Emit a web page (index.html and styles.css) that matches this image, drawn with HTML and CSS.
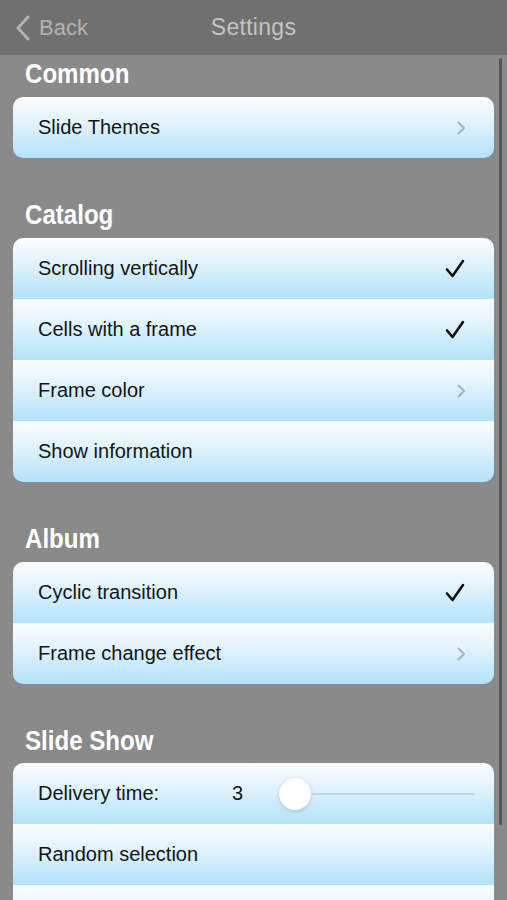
FILE: index.html
```html
<!DOCTYPE html>
<html>
<head>
<meta charset="utf-8">
<link rel="stylesheet" href="styles.css">
</head>
<body>
<div class="nav">
  <div class="back">
    <svg class="back-chev" width="14" height="26" viewBox="0 0 14 26"><path d="M12 2 L2 13 L12 24" fill="none" stroke="#b3b3b3" stroke-width="3" stroke-linecap="round" stroke-linejoin="round"/></svg>
    <span>Back</span>
  </div>
  <div class="title">Settings</div>
</div>
<div class="content">
  <h2 class="section"><span>Common</span></h2>
  <div class="card">
    <div class="row"><span class="label">Slide Themes</span><svg class="chev" width="9" height="14" viewBox="0 0 9 14"><path d="M1.5 1.5 L7 7 L1.5 12.5" fill="none" stroke="#a3b5c0" stroke-width="2" stroke-linecap="round" stroke-linejoin="round"/></svg></div>
  </div>

  <h2 class="section"><span>Catalog</span></h2>
  <div class="card">
    <div class="row"><span class="label">Scrolling vertically</span><svg class="check" width="20" height="20" viewBox="0 0 20 20"><path d="M2 10.5 L7.5 17 L18 2" fill="none" stroke="#111" stroke-width="2.6" stroke-linecap="round" stroke-linejoin="round"/></svg></div>
    <div class="row"><span class="label">Cells with a frame</span><svg class="check" width="20" height="20" viewBox="0 0 20 20"><path d="M2 10.5 L7.5 17 L18 2" fill="none" stroke="#111" stroke-width="2.6" stroke-linecap="round" stroke-linejoin="round"/></svg></div>
    <div class="row"><span class="label">Frame color</span><svg class="chev" width="9" height="14" viewBox="0 0 9 14"><path d="M1.5 1.5 L7 7 L1.5 12.5" fill="none" stroke="#a3b5c0" stroke-width="2" stroke-linecap="round" stroke-linejoin="round"/></svg></div>
    <div class="row"><span class="label">Show information</span></div>
  </div>

  <h2 class="section"><span>Album</span></h2>
  <div class="card">
    <div class="row"><span class="label">Cyclic transition</span><svg class="check" width="20" height="20" viewBox="0 0 20 20"><path d="M2 10.5 L7.5 17 L18 2" fill="none" stroke="#111" stroke-width="2.6" stroke-linecap="round" stroke-linejoin="round"/></svg></div>
    <div class="row"><span class="label">Frame change effect</span><svg class="chev" width="9" height="14" viewBox="0 0 9 14"><path d="M1.5 1.5 L7 7 L1.5 12.5" fill="none" stroke="#a3b5c0" stroke-width="2" stroke-linecap="round" stroke-linejoin="round"/></svg></div>
  </div>

  <h2 class="section"><span>Slide Show</span></h2>
  <div class="card last">
    <div class="row slider-row">
      <span class="label fixed">Delivery time:</span>
      <span class="value">3</span>
      <div class="slider"><div class="thumb"></div><div class="track"></div></div>
    </div>
    <div class="row"><span class="label">Random selection</span></div>
    <div class="row"><span class="label">&nbsp;</span></div>
  </div>
</div>
<div class="scrollbar"></div>
</body>
</html>
```
FILE: styles.css
```css
html, body {
  margin: 0;
  padding: 0;
  height: 900px;
  overflow: hidden;
}
body {
  background: #8a8a8a;
  font-family: "Liberation Sans", Arial, sans-serif;
  position: relative;
}
.nav {
  height: 55px;
  background: #707070;
  position: relative;
  display: flex;
  align-items: center;
}
.back {
  display: flex;
  align-items: center;
  padding-left: 16px;
  color: #b3b3b3;
  font-size: 22px;
}
.back-chev {
  margin-right: 9px;
}
.title {
  position: absolute;
  left: 0;
  right: 0;
  text-align: center;
  color: #c4c4c4;
  font-size: 23px;
  letter-spacing: 0.3px;
  pointer-events: none;
}
.content {
  padding: 2px 13px 0 13px;
}
.section {
  margin: 0;
  height: 34px;
  line-height: 34px;
  font-size: 28px;
  font-weight: bold;
  color: #ffffff;
  padding-left: 12px;
}
.section span {
  display: inline-block;
  transform: scaleX(0.86);
  transform-origin: left center;
  white-space: nowrap;
}
.card {
  margin: 6px 0 40px 0;
  border-radius: 10px;
  overflow: hidden;
  width: 481px;
}
.card.last {
  margin-top: 5px;
}
.row {
  height: 61px;
  display: flex;
  align-items: center;
  padding: 0 28px 0 25px;
  background: linear-gradient(#fbfdff 0%, #e6f5fd 35%, #c9ebfb 70%, #b3e2f9 100%);
  color: #151515;
  font-size: 20px;
}
.label {
  flex: 1;
  white-space: nowrap;
}
.label.fixed {
  flex: 0 0 194px;
}
.check {
  margin-right: 1px;
}
.slider-row {
  padding-right: 19px;
}
.value {
  flex: 0 0 47px;
}
.slider {
  flex: 1;
  display: flex;
  align-items: center;
  height: 34px;
}
.thumb {
  width: 32px;
  height: 32px;
  border-radius: 50%;
  background: #ffffff;
  box-shadow: 0 1px 4px rgba(0, 0, 0, 0.18);
  flex: 0 0 32px;
}
.track {
  flex: 1;
  height: 2px;
  background: #c4d5df;
  border-radius: 1px;
}
.scrollbar {
  position: absolute;
  left: 499px;
  top: 58px;
  width: 3px;
  height: 767px;
  border-radius: 2px;
  background: #555555;
}
```
